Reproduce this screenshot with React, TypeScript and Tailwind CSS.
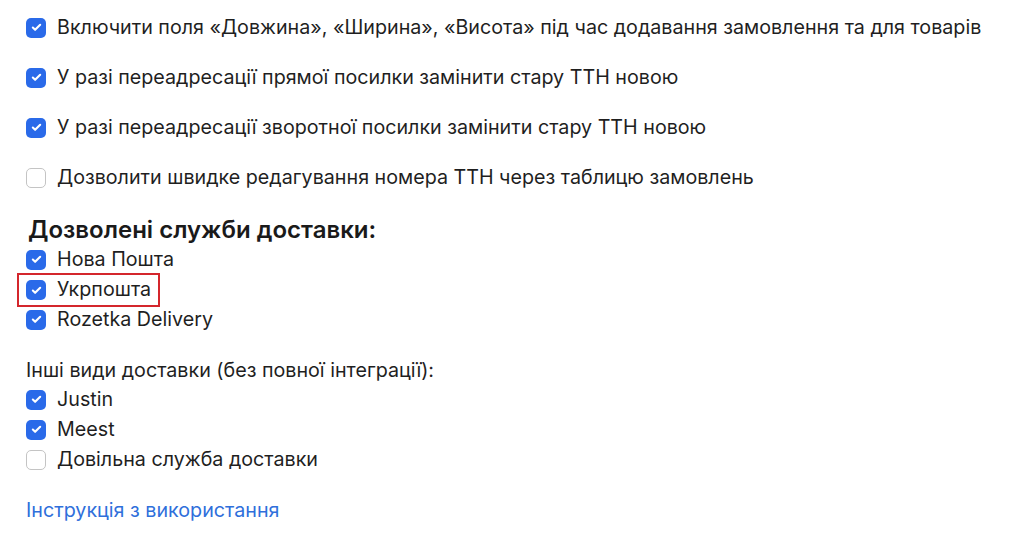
import { Check } from 'lucide-react';

type Item = { label: string; checked: boolean; highlight?: boolean };

const TOP: Item[] = [
  { label: 'Включити поля «Довжина», «Ширина», «Висота» під час додавання замовлення та для товарів', checked: true },
  { label: 'У разі переадресації прямої посилки замінити стару ТТН новою', checked: true },
  { label: 'У разі переадресації зворотної посилки замінити стару ТТН новою', checked: true },
  { label: 'Дозволити швидке редагування номера ТТН через таблицю замовлень', checked: false },
];

const SERVICES: Item[] = [
  { label: 'Нова Пошта', checked: true },
  { label: 'Укрпошта', checked: true, highlight: true },
  { label: 'Rozetka Delivery', checked: true },
];

const OTHER: Item[] = [
  { label: 'Justin', checked: true },
  { label: 'Meest', checked: true },
  { label: 'Довільна служба доставки', checked: false },
];

function Box({ checked }: { checked: boolean }) {
  return checked ? (
    <span className="flex h-5 w-5 shrink-0 items-center justify-center rounded-[5px] bg-[#2a6ae9]">
      <Check size={11} strokeWidth={4.5} className="text-white" />
    </span>
  ) : (
    <span className="h-5 w-5 shrink-0 rounded-[5px] border border-[#c4c4c4] bg-white" />
  );
}

function Row({ item }: { item: Item }) {
  return (
    <label
      className={`flex items-center gap-[11px] ${
        item.highlight ? '-mx-[9px] w-fit border-2 border-[#d4262c] px-[7px]' : ''
      }`}
    >
      <Box checked={item.checked} />
      <span>{item.label}</span>
    </label>
  );
}

export default function App() {
  return (
    <div
      className="min-h-screen bg-white px-[26px] pt-[3px] text-[19.7px] text-[#1f1f1f]"
      style={{ fontFamily: 'Inter, "Noto Sans", sans-serif' }}
    >
      {/* Order options */}
      <div className="flex flex-col">
        {TOP.map((item) => (
          <div key={item.label} className="flex h-[50px] items-center">
            <Row item={item} />
          </div>
        ))}
      </div>

      {/* Allowed delivery services */}
      <h3 className="mt-[12px] pl-[2px] text-[24px] font-semibold leading-[30px] text-[#1a1a1a]">
        Дозволені служби доставки:
      </h3>
      <div className="flex flex-col">
        {SERVICES.map((item) => (
          <div key={item.label} className="flex h-[30px] items-center">
            <Row item={item} />
          </div>
        ))}
      </div>

      <p className="mt-[20px] leading-[30px]">Інші види доставки (без повної інтеграції):</p>
      <div className="flex flex-col">
        {OTHER.map((item) => (
          <div key={item.label} className="flex h-[30px] items-center">
            <Row item={item} />
          </div>
        ))}
      </div>

      <a href="#" className="mt-[20px] block leading-[30px] text-[#2f6fdb]">
        Інструкція з використання
      </a>
    </div>
  );
}
